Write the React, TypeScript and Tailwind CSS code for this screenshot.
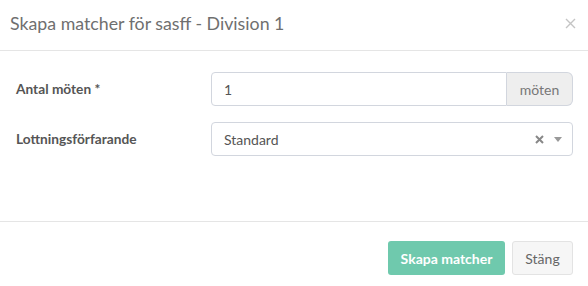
import React from 'react';

const App: React.FC = () => {
  return (
    <div className="w-[588px] h-[286px] bg-white font-['Lato',sans-serif] text-[#555]">
      {/* Header */}
      <div className="h-[51px] border-b border-[#e5e5e5] flex items-center justify-between pl-[10px] pr-[12px]">
        <h4 className="text-[17.75px] text-[#6f6f6f] leading-none pb-[2px]">Skapa matcher för sasff - Division 1</h4>
        <button className="text-[#c4c4c4] mt-[-4px]">
          <svg width="11" height="11" viewBox="0 0 11 11">
            <path d="M1 1L10 10M10 1L1 10" stroke="currentColor" strokeWidth="1.4" />
          </svg>
        </button>
      </div>

      {/* Body */}
      <div className="h-[170px] pt-[21px] px-[15px] flex flex-col gap-[16px]">
        <div className="flex items-center">
          <label className="w-[196px] pl-[1px] text-[13.7px] font-bold text-[#555]">Antal möten *</label>
          <div className="flex flex-1 h-[34px]">
            <input
              defaultValue="1"
              className="flex-1 min-w-0 border border-[#d2d6de] rounded-l-[4px] px-[12px] text-[14px] text-[#555] outline-none"
            />
            <span className="w-[66px] bg-[#eeeeee] border border-l-0 border-[#d2d6de] rounded-r-[6px] flex items-center justify-center text-[14px] text-[#777]">
              möten
            </span>
          </div>
        </div>
        <div className="flex items-center">
          <label className="w-[196px] pl-[1px] text-[13.7px] font-bold text-[#555]">Lottningsförfarande</label>
          <div className="flex-1 h-[34px] border border-[#d2d6de] rounded-[4px] flex items-center px-[12px] text-[14px] text-[#555]">
            <span className="flex-1">Standard</span>
            <svg width="9" height="9" viewBox="0 0 9 9" className="mr-[10px] text-[#888]">
              <path d="M1 1L8 8M8 1L1 8" stroke="currentColor" strokeWidth="2" />
            </svg>
            <svg width="8" height="5" viewBox="0 0 8 5" className="mr-[-2px] text-[#999]">
              <path d="M0 0H8L4 5Z" fill="currentColor" />
            </svg>
          </div>
        </div>
      </div>

      {/* Footer */}
      <div className="border-t border-[#e5e5e5] flex justify-end gap-[7px] pt-[19px] pr-[15px]">
        <button className="h-[34px] w-[117px] bg-[#6fc9ad] text-white rounded-[3px] text-[14px] font-bold">
          Skapa matcher
        </button>
        <button className="h-[34px] w-[61px] bg-[#f6f6f6] border border-[#e3e3e3] text-[#666] rounded-[3px] text-[14px]">
          Stäng
        </button>
      </div>
    </div>
  );
};

export default App;
